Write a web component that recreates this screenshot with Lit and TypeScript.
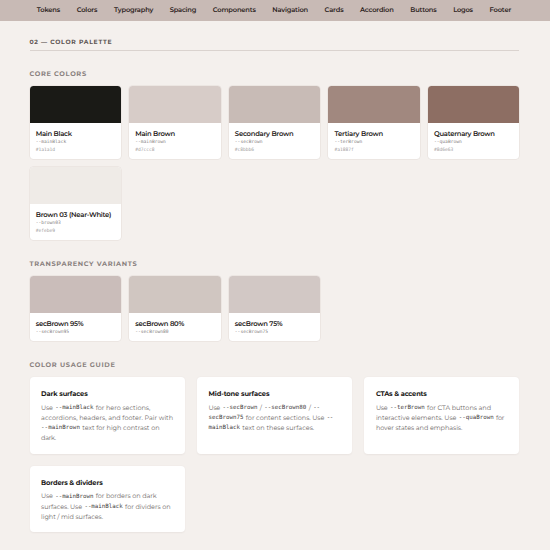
import { LitElement, html, css } from "lit";
import { customElement, property } from "lit/decorators.js";
import { styleMap } from "lit/directives/style-map.js";

/** One run of text, tracked so that it fills a given width. */
@customElement("fit-text")
class FitText extends LitElement {
  @property() text = "";
  @property({ type: Number }) w = 0;
  static styles = css`
    :host { display: block; flex: none; white-space: pre; }
    .run { display: inline-block; white-space: pre; vertical-align: top; }
  `;
  render() {
    return html`<span class="run">${this.text}</span>`;
  }
  updated() {
    const run = this.renderRoot.querySelector(".run") as HTMLElement;
    run.style.letterSpacing = "0px";
    const natural = run.getBoundingClientRect().width;
    const gaps = Math.max(1, this.text.length - 1);
    run.style.letterSpacing = `${(this.w - natural) / gaps}px`;
    this.style.width = `${this.w}px`;
  }
}

type Run = [string, number];

const nav: Run[] = [
  ["Tokens", 23.4], ["Colors", 20.8], ["Typography", 39.4], ["Spacing", 26.6],
  ["Components", 43], ["Navigation", 35.8], ["Cards", 19], ["Accordion", 33.8],
  ["Buttons", 26.4], ["Logos", 19.8], ["Footer", 21.8],
];

interface Swatch { color: string; name: Run; token: Run; hex?: Run }

const core: Swatch[] = [
  { color: "#1a1a16", name: ["Main Black", 36.4], token: ["--mainBlack", 30.5], hex: ["#1a1a1d", 19.3] },
  { color: "#d7ccc8", name: ["Main Brown", 39.8], token: ["--mainBrown", 30.5], hex: ["#d7ccc8", 19.3] },
  { color: "#c8bbb6", name: ["Secondary Brown", 58.8], token: ["--secBrown", 27.8], hex: ["#c8bbb6", 19.3] },
  { color: "#a1887f", name: ["Tertiary Brown", 48.8], token: ["--terBrown", 27.8], hex: ["#a1887f", 19.3] },
  { color: "#8d6e63", name: ["Quaternary Brown", 61], token: ["--quaBrown", 27.8], hex: ["#8d6e63", 19.3] },
  { color: "#efebe7", name: ["Brown 03 (Near-White)", 75.8], token: ["--brown03", 25], hex: ["#efebe9", 19.3] },
];

const variants: Swatch[] = [
  { color: "#cabdba", name: ["secBrown 95%", 47.8], token: ["--secBrown95", 33.3] },
  { color: "#d0c6c1", name: ["secBrown 80%", 49], token: ["--secBrown80", 33.3] },
  { color: "#d2c8c5", name: ["secBrown 75%", 47.8], token: ["--secBrown75", 33.3] },
];

interface Guide { title: Run; lines: Run[][] }

const guides: Guide[] = [
  { title: ["Dark surfaces", 46.6], lines: [
    [["Use", 11.8], ["--mainBlack", 38.2], ["for hero sections,", 54.6]],
    [["accordions, headers, and footer. Pair with", 132]],
    [["--mainBrown", 38.8], ["text for high contrast on", 77.4]],
    [["dark.", 15]],
  ] },
  { title: ["Mid-tone surfaces", 61], lines: [
    [["Use", 11.8], ["--secBrown", 34.8], ["/", 2.4], ["--secBrown80", 42], ["/", 2.4], ["--", 6.6]],
    [["secBrown75", 35], ["for content sections. Use", 78.6], ["--", 6.6]],
    [["mainBlack", 31.4], ["text on these surfaces.", 72]],
  ] },
  { title: ["CTAs & accents", 51], lines: [
    [["Use", 11.8], ["--terBrown", 34.8], ["for CTA buttons and", 64]],
    [["interactive elements. Use", 80.6], ["--quaBrown", 35], ["for", 8.4]],
    [["hover states and emphasis.", 86.4]],
  ] },
  { title: ["Borders & dividers", 61.6], lines: [
    [["Use", 11.8], ["--mainBrown", 38.2], ["for borders on dark", 61]],
    [["surfaces. Use", 41], ["--mainBlack", 38.4], ["for dividers on", 45.6]],
    [["light / mid surfaces.", 62]],
  ] },
];

const isCode = (t: string) => /^(--|secBrown|mainBlack)/.test(t);
const fit = ([text, w]: Run, cls = "") =>
  html`<fit-text class=${cls} .text=${text} .w=${w}></fit-text>`;

@customElement("app-root")
class AppRoot extends LitElement {
  static styles = css`
    :host {
      display: block;
      height: 550px;
      overflow: hidden;
      background: #f4f0ed;
      font-family: "Montserrat", "Inter", sans-serif;
      text-rendering: geometricPrecision;
      color: #1f1b1a;
    }
    nav {
      height: 21px;
      box-sizing: border-box;
      padding: 0 38.7px 1px 36.8px;
      display: flex;
      align-items: center;
      justify-content: space-between;
      background: #c8bab5;
      font-size: 6.7px;
      font-weight: 600;
      line-height: 10px;
      color: #2e2423;
    }
    main { padding: 0 30.6px 0 29.5px; }
    .section {
      height: 29.5px;
      box-sizing: border-box;
      padding-top: 15.6px;
      border-bottom: 1px solid #dad3cf;
      font-size: 6.1px;
      font-weight: 700;
      line-height: 10px;
      color: #5d5553;
    }
    .label {
      font-size: 6.6px;
      font-weight: 700;
      line-height: 10px;
      height: 10px;
      color: #8a827f;
    }
    .first { margin-top: 18.4px; }
    .next { margin-top: 18.4px; }
    .swatches {
      margin-top: 7.4px;
      display: grid;
      grid-template-columns: repeat(5, 1fr);
      gap: 8px;
    }
    .card {
      box-sizing: border-box;
      height: 73px;
      border-radius: 3.5px;
      overflow: hidden;
      background: #fff;
      box-shadow: 0 0 0 0.5px #e3dcd8;
    }
    .card.short { height: 65.2px; }
    .chip { height: 37px; }
    .info { padding: 5.5px 0 0 6.2px; }
    .name { font-size: 6.8px; font-weight: 600; line-height: 10px; }
    .token, .hex { font-family: "DejaVu Sans Mono", monospace; font-size: 4.6px; line-height: 7.4px; }
    .token { color: #858080; margin-top: 0.6px; }
    .hex { color: #a19c9c; }
    .guides {
      margin-top: 7.3px;
      display: grid;
      grid-template-columns: repeat(3, 1fr);
      grid-template-rows: 76.6px 66.2px;
      gap: 12.3px;
    }
    .guide {
      background: #fff;
      border-radius: 4px;
      padding: 12px 0 0 11.6px;
      box-shadow: 0 0.5px 2px rgba(60, 40, 30, 0.06);
    }
    .title { font-size: 6.7px; font-weight: 700; line-height: 10px; height: 10px; margin-bottom: 3.6px; color: #1b1918; }
    .line { display: flex; gap: 2.3px; height: 10.1px; line-height: 10.1px; font-size: 6.5px; font-weight: 400; color: #716b6a; }
    .code { font-family: "DejaVu Sans Mono", monospace; font-size: 5.8px; font-weight: 400; color: #444040; padding-top: 0.5px; }
  `;

  private swatch(s: Swatch) {
    return html`<div class="card ${s.hex ? "" : "short"}">
      <div class="chip" style=${styleMap({ background: s.color })}></div>
      <div class="info">
        ${fit(s.name, "name")}${fit(s.token, "token")}${s.hex ? fit(s.hex, "hex") : ""}
      </div>
    </div>`;
  }

  render() {
    return html`
      <nav>${nav.map((n) => fit(n))}</nav>
      <main>
        <div class="section">${fit(["02 — COLOR PALETTE", 82])}</div>
        <div class="label first">${fit(["CORE COLORS", 56.6])}</div>
        <div class="swatches">${core.map((s) => this.swatch(s))}</div>
        <div class="label next">${fit(["TRANSPARENCY VARIANTS", 107.2])}</div>
        <div class="swatches">${variants.map((s) => this.swatch(s))}</div>
        <div class="label next">${fit(["COLOR USAGE GUIDE", 85.4])}</div>
        <div class="guides">
          ${guides.map((g) => html`<div class="guide">
            ${fit(g.title, "title")}
            ${g.lines.map((l) => html`<div class="line">${l.map((r) => fit(r, isCode(r[0]) ? "code" : ""))}</div>`)}
          </div>`)}
        </div>
      </main>
    `;
  }
}
